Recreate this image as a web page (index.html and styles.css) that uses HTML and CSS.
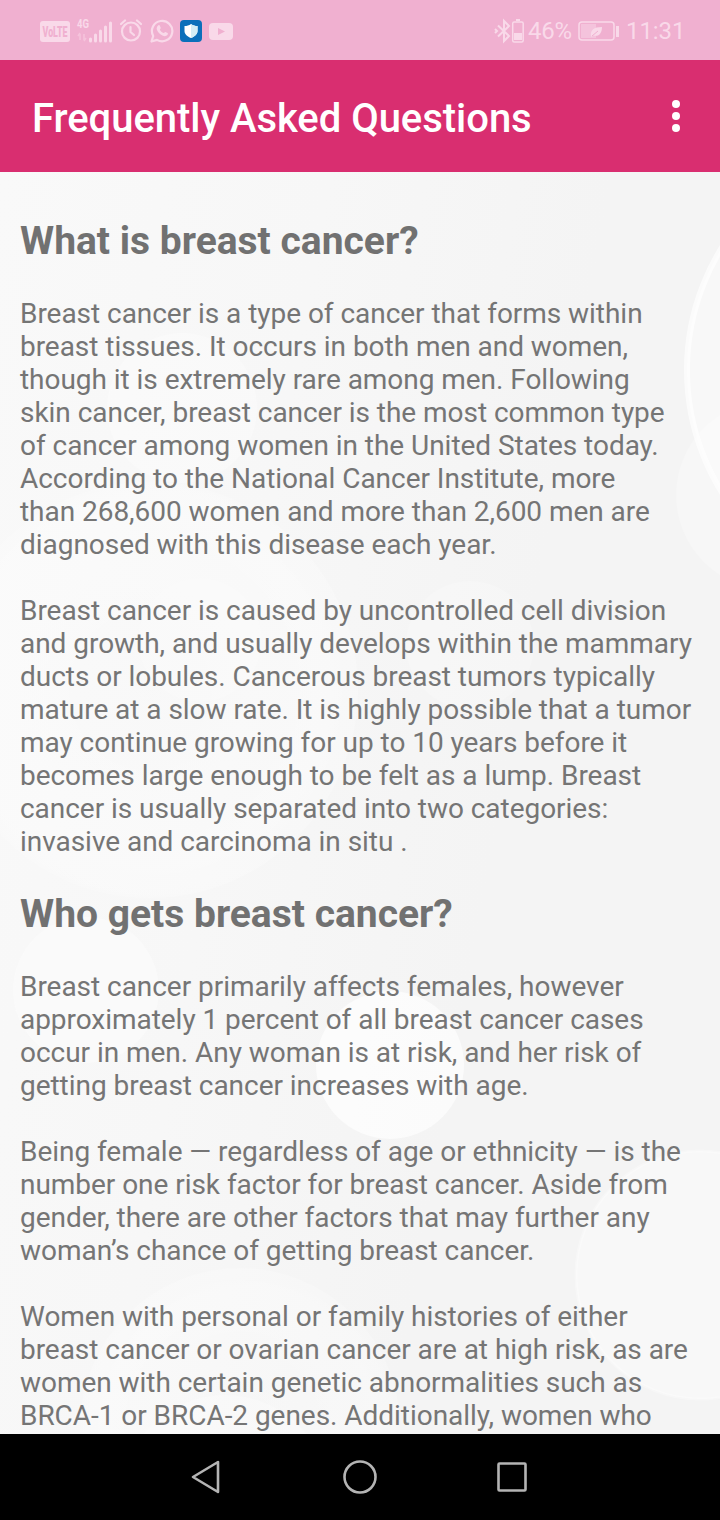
FILE: index.html
```html
<!DOCTYPE html>
<html lang="en">
<head>
    <meta charset="UTF-8">
    <meta name="viewport" content="width=device-width, initial-scale=1.0">
    <title>Frequently Asked Questions</title>
    <link rel="stylesheet" href="styles.css">
</head>
<body>
    <div class="status-bar">
        <div class="status-left">
            <svg class="volte" width="30" height="21" viewBox="0 0 30 21">
                <rect width="30" height="21" rx="3" fill="#f9d9e9"/>
                <text x="2.500" y="15.500" textLength="25" lengthAdjust="spacingAndGlyphs">VoLTE</text>
            </svg>
            <svg class="signal" width="36" height="26" viewBox="0 0 36 26">
                <text x="0" y="10" class="net" textLength="12" lengthAdjust="spacingAndGlyphs">4G</text>
                <path d="M3 16v6M1 18l2-3M7 16v6M9 20l-2 3" stroke="#f5c3dc" stroke-width="1.500" fill="none"/>
                <path d="M13.500 23v-2M18.500 23v-6M23.500 23v-10M28.500 23v-14M33.500 23V5" stroke="#f9d9e9" stroke-width="3" fill="none" stroke-linecap="round"/>
            </svg>
            <svg class="alarm" width="22" height="24" viewBox="0 0 22 24">
                <g stroke="#f9d9e9" stroke-width="2.200" fill="none" stroke-linecap="round" stroke-linejoin="round">
                    <circle cx="11" cy="12.500" r="9"/>
                    <path d="M10.500 8v5l3.500 3M1 5l4-3.500M21 5l-4-3.500"/>
                </g>
            </svg>
            <svg class="whatsapp" width="24" height="24" viewBox="0 0 24 24">
                <path d="M1.500 22.500l1.700-5.500A10.200 10.200 0 1 1 7 20.900z" stroke="#f9d9e9" stroke-width="2.200" fill="none" stroke-linejoin="round"/>
                <path d="M8.200 6.400c.5-.5 1.300-.5 1.600.2l.9 2.100c.2.500-.8 1.400-.9 1.700.8 1.700 2 2.900 3.900 3.700.4-.1 1.200-1.300 1.700-1.200l2.200 1.100c.5.300.2 1.500-.2 2.100-1 1.200-2.700 1.400-4.500.7-3.200-1.200-5.300-3.700-6.100-6.200-.4-1.500.1-3.200 1.400-4.200z" fill="#f9d9e9"/>
            </svg>
            <svg class="shield" width="22" height="22" viewBox="0 0 22 22">
                <rect width="22" height="22" rx="4" fill="#0b6fba"/>
                <path d="M11 4c2 1.500 4 2 6.500 2v5c0 3.500-3 5.500-6.500 7-3.500-1.500-6.500-3.500-6.500-7V6C7 6 9 5.500 11 4z" fill="#fff"/>
                <path d="M11 4c2 1.500 4 2 6.500 2v5c0 3.500-3 5.500-6.500 7z" fill="#d3edf5"/>
            </svg>
            <svg class="play" width="24" height="17" viewBox="0 0 24 17">
                <rect width="24" height="17" rx="4" fill="#f9d9e9"/>
                <path d="M9 5l7 3.500L9 12z" fill="#f0b0d0"/>
            </svg>
        </div>
        <div class="status-right">
            <svg class="bluetooth" width="34" height="26" viewBox="0 0 34 26">
                <path d="M4 7.500l11 10.500-5 5V3l5 5L4 18.500M1 11l2 2-2 2" stroke="#f9d9e9" stroke-width="2" fill="none"/>
                <rect x="18.700" y="4" width="10.500" height="20" rx="1.500" stroke="#f9d9e9" stroke-width="1.500" fill="none"/>
                <path d="M22 2h4" stroke="#f9d9e9" stroke-width="2"/>
                <rect x="20" y="15" width="8" height="7" fill="#f9d9e9"/>
            </svg>
            <span class="percent">46%</span>
            <svg class="battery" width="41" height="20" viewBox="0 0 41 20">
                <rect x="1" y="1" width="35" height="18" rx="3" stroke="#f9d9e9" stroke-width="1.500" fill="none"/>
                <rect x="3" y="3" width="15" height="14" fill="#f4c3dc"/>
                <path d="M13 15.500c-1-6.500 3-9.500 11-9.500 0 6-3 10-8.500 8.500l-1.500 1z" fill="#f9d9e9"/>
                <path d="M14 15l6-5" stroke="#f0b0d0" stroke-width="1"/>
                <path d="M39.500 5v11" stroke="#f9d9e9" stroke-width="3"/>
            </svg>
            <span class="clock">11:31</span>
        </div>
    </div>

    <div class="app-bar">
        <h1>Frequently Asked Questions</h1>
        <svg class="menu" width="8" height="32" viewBox="0 0 8 32">
            <circle cx="4" cy="4" r="4"/>
            <circle cx="4" cy="16" r="4"/>
            <circle cx="4" cy="28" r="4"/>
        </svg>
    </div>

    <div class="content">
        <!-- soft circles behind the text -->
        <svg class="bubbles" width="720" height="1262" viewBox="0 172 720 1262">
            <defs>
                <radialGradient id="soft">
                    <stop offset="0" stop-color="#fff" stop-opacity="0.1"/>
                    <stop offset="0.85" stop-color="#fff" stop-opacity="0.35"/>
                    <stop offset="1" stop-color="#fff" stop-opacity="0.2"/>
                </radialGradient>
            </defs>
            <circle cx="919" cy="370" r="232" fill="#fff" fill-opacity="0.4" stroke="#fff" stroke-opacity="0.65" stroke-width="6"/>
            <circle cx="771" cy="495" r="95" fill="#fff" fill-opacity="0.25"/>
            <circle cx="182" cy="408" r="75" fill="#fff" fill-opacity="0.3"/>
            <circle cx="150" cy="690" r="208" fill="url(#soft)"/>
            <circle cx="200" cy="640" r="62" fill="#fff" fill-opacity="0.15"/>
            <circle cx="470" cy="645" r="64" fill="#fff" fill-opacity="0.2"/>
            <circle cx="86" cy="990" r="73" fill="#fff" fill-opacity="0.35"/>
            <circle cx="390" cy="1065" r="74" fill="#fff" fill-opacity="0.65"/>
            <circle cx="700" cy="1275" r="124" fill="#fff" fill-opacity="0.4" stroke="#fff" stroke-opacity="0.3" stroke-width="3"/>
            <circle cx="240" cy="1428" r="160" fill="url(#soft)"/>
            <circle cx="225" cy="1500" r="105" fill="#fff" fill-opacity="0.25"/>
        </svg>
        <div class="faq">
            <h2>What is breast cancer?</h2>
            <p>Breast cancer is a type of cancer that forms within<br>
                breast tissues. It occurs in both men and women,<br>
                though it is extremely rare among men. Following<br>
                skin cancer, breast cancer is the most common type<br>
                of cancer among women in the United States today.<br>
                According to the National Cancer Institute, more<br>
                than 268,600 women and more than 2,600 men are<br>
                diagnosed with this disease each year.</p>
            <p>Breast cancer is caused by uncontrolled cell division<br>
                and growth, and usually develops within the mammary<br>
                ducts or lobules. Cancerous breast tumors typically<br>
                mature at a slow rate. It is highly possible that a tumor<br>
                may continue growing for up to 10 years before it<br>
                becomes large enough to be felt as a lump. Breast<br>
                cancer is usually separated into two categories:<br>
                invasive and carcinoma in situ .</p>
            <h2>Who gets breast cancer?</h2>
            <p>Breast cancer primarily affects females, however<br>
                approximately 1 percent of all breast cancer cases<br>
                occur in men. Any woman is at risk, and her risk of<br>
                getting breast cancer increases with age.</p>
            <p>Being female — regardless of age or ethnicity — is the<br>
                number one risk factor for breast cancer. Aside from<br>
                gender, there are other factors that may further any<br>
                woman’s chance of getting breast cancer.</p>
            <p>Women with personal or family histories of either<br>
                breast cancer or ovarian cancer are at high risk, as are<br>
                women with certain genetic abnormalities such as<br>
                BRCA-1 or BRCA-2 genes. Additionally, women who</p>
        </div>
    </div>

    <div class="nav-bar">
        <svg width="34" height="34" viewBox="0 0 34 34"><path d="M27 2v30L2 17z"/></svg>
        <svg width="34" height="34" viewBox="0 0 34 34"><circle cx="17" cy="17" r="15.500"/></svg>
        <svg width="34" height="34" viewBox="0 0 34 34"><rect x="3.500" y="3.500" width="27" height="27" rx="1"/></svg>
    </div>
</body>
</html>
```
FILE: styles.css
```css
* {
    box-sizing: border-box;
}
body {
    margin: 0;
    width: 720px;
    height: 1520px;
    overflow: hidden;
    display: flex;
    flex-direction: column;
    font-family: Roboto, sans-serif;
}
h1, h2, p {
    margin: 0;
}
svg {
    display: block;
    flex: none;
}
.status-bar {
    height: 60px;
    flex: none;
    display: flex;
    justify-content: space-between;
    align-items: center;
    padding: 2px 36px 0 40px;
    background: #f0b0d0;
    color: #f9d9e9;
}
.status-left, .status-right {
    display: flex;
    align-items: center;
}
.volte, .signal {
    overflow: visible;
}
.volte text {
    font-size: 15px;
    font-weight: 900;
    fill: #f0b0d0;
}
.signal {
    margin-left: 7px;
}
.net {
    font-size: 13px;
    font-weight: bold;
    fill: #f9d9e9;
}
.alarm {
    margin-left: 7px;
}
.whatsapp {
    margin-left: 8px;
}
.shield {
    margin-left: 6px;
}
.play {
    margin-left: 7px;
}
.percent {
    width: 43px;
    font-size: 24px;
    letter-spacing: -0.3px;
}
.battery {
    margin: 0 7px;
}
.clock {
    width: 58px;
    font-size: 24px;
    letter-spacing: -0.1px;
}
.app-bar {
    height: 112px;
    flex: none;
    display: flex;
    justify-content: space-between;
    align-items: center;
    padding: 0 40px 0 32px;
    background: #d92e70;
}
.app-bar h1 {
    padding-top: 4px;
    font-size: 40px;
    font-weight: 500;
    letter-spacing: -0.04px;
    color: #fff;
}
.menu {
    fill: #fff;
}
.content {
    position: relative;
    flex: 1;
    overflow: hidden;
    background: linear-gradient(100deg, #f9f9f9 0%, #f7f7f7 35%, #f4f4f4 65%, #f4f4f4 100%);
}
.bubbles {
    position: absolute;
    top: 0;
    left: 0;
}
.faq {
    position: relative;
    padding: 46px 0 0 20px;
    color: #757575;
    white-space: nowrap;
}
.faq h2 {
    margin-bottom: 33px;
    font-size: 39px;
    font-weight: bold;
    line-height: 46px;
    color: #717171;
}
.faq p {
    margin-bottom: 33px;
    font-size: 28px;
    line-height: 33px;
    letter-spacing: -0.04px;
}
.nav-bar {
    height: 86px;
    flex: none;
    display: flex;
    justify-content: center;
    align-items: center;
    gap: 118px;
    background: #000;
}
.nav-bar svg {
    fill: none;
    stroke: #b4b4b4;
    stroke-width: 2.6;
    stroke-linejoin: round;
}
```
